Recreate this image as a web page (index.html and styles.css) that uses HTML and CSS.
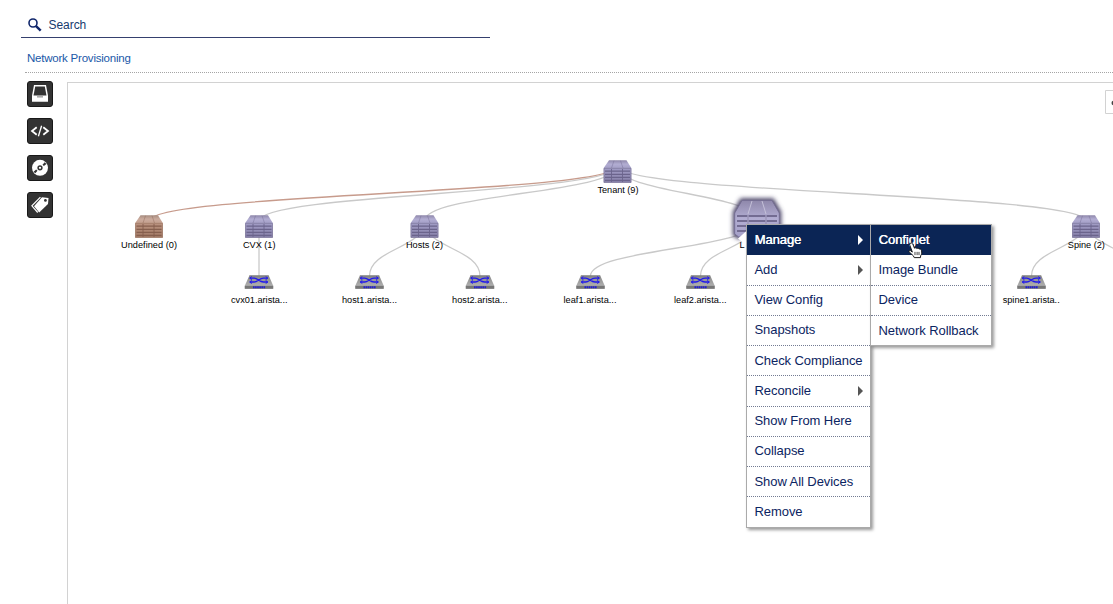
FILE: index.html
```html
<!DOCTYPE html>
<html lang="en">
<head>
<meta charset="utf-8">
<title>Network Provisioning</title>
<link rel="stylesheet" href="styles.css">
</head>
<body>
<header class="search">
  <svg class="search-icon" width="14" height="14" viewBox="0 0 14 14"><circle cx="5" cy="5" r="4" fill="none" stroke="#10266b" stroke-width="1.6"/><path d="M7.800 7.800 12.700 12.700" stroke="#10266b" stroke-width="2.400"/></svg>
  <span class="search-label">Search</span>
</header>
<nav class="breadcrumb"><span>Network Provisioning</span></nav>
<main class="workspace">
  <aside class="tools">
    <button class="tool" aria-label="Devices"><svg width="26" height="26" viewBox="0 0 26 26"><path d="M7 4h12l2 10.500v6.300H5v-6.300z" fill="#fff"/><path d="M8.200 5.500h9.600l1.700 9H6.500z" fill="#333"/><path d="M10 15h6v1.600h-6z" fill="#aaa"/></svg></button>
    <button class="tool" aria-label="Configlets"><svg width="26" height="26" viewBox="0 0 26 26" fill="none" stroke="#fff" stroke-width="1.8"><path d="M9.700 9.200 5 13l4.700 3.800M16.300 9.200l4.700 3.800-4.700 3.800"/><path d="M14.600 7.800 11.400 18.200" stroke-width="1.300"/></svg></button>
    <button class="tool" aria-label="Images"><svg width="26" height="26" viewBox="0 0 26 26"><circle cx="13" cy="12.800" r="8" fill="#fff"/><circle cx="13" cy="12.800" r="1.900" fill="#fff" stroke="#333" stroke-width="1.500"/><path d="m15.500 9.800 2.200-2.500 1.700 1.600-2.500 2.200zM10.500 15.800l-2.200 2.500-1.700-1.600 2.500-2.200z" fill="#333"/></svg></button>
    <button class="tool" aria-label="Labels"><svg width="26" height="26" viewBox="0 0 26 26"><path d="m15 5.200 6.500.8-.5 6-8.800 8.500L7 14.200z" fill="#fff"/><path d="M13.400 5.200 4.900 13.800l5.800 6.700" fill="none" stroke="#fff" stroke-width="1.200"/><circle cx="18.400" cy="8.400" r="1.400" fill="#333"/></svg></button>
  </aside>
  <section class="canvas">
    <svg class="tree" width="1045" height="521" viewBox="68 83 1045 521">
      <defs>
        <linearGradient id="roof" x1="0" y1="0" x2="0" y2="1"><stop offset="0" stop-color="#8f88ab"/><stop offset=".5" stop-color="#b2add2"/><stop offset="1" stop-color="#a5a0c8"/></linearGradient>
        <linearGradient id="body" x1="0" y1="0" x2="0" y2="1"><stop offset="0" stop-color="#a29dc6"/><stop offset="1" stop-color="#8680a8"/></linearGradient>
        <linearGradient id="roof-alert" x1="0" y1="0" x2="0" y2="1"><stop offset="0" stop-color="#a88e82"/><stop offset=".5" stop-color="#cbab9d"/><stop offset="1" stop-color="#c49f8f"/></linearGradient>
        <linearGradient id="body-alert" x1="0" y1="0" x2="0" y2="1"><stop offset="0" stop-color="#bb9380"/><stop offset="1" stop-color="#a17965"/></linearGradient>
        <linearGradient id="metal" x1="0" y1="0" x2="0" y2="1"><stop offset="0" stop-color="#858585"/><stop offset="1" stop-color="#bcbcbc"/></linearGradient>
        <filter id="glow" x="-30%" y="-30%" width="160%" height="160%"><feGaussianBlur stdDeviation="2"/></filter>
        <g id="rack-lines" fill="none">
          <path d="M-12.500-.8h25M-12.500 2.300h25M-12.500 5.300h25M-12.500 8.300h25" stroke-width="1.300"/>
          <path d="M-6-3v13M5-3v13" stroke-width=".9"/>
          <path d="M-3.500-11.300-6-4M3-11.300 5.500-4" stroke-width=".7" opacity=".55"/>
        </g>
        <g id="container">
          <path d="M-8.500-11.700h17.500l4.800 7.700h-27.600z" fill="url(#roof)"/>
          <path d="M-13.800-4h27.600v14.700h-27.600z" fill="url(#body)"/>
          <path d="M-13.500-3.700h27v14.100h-27z" fill="none" stroke="#777093" stroke-width=".6"/>
          <use href="#rack-lines" stroke="#6b648c"/>
        </g>
        <g id="container-alert">
          <path d="M-8.500-11.700h17.500l4.800 7.700h-27.600z" fill="url(#roof-alert)"/>
          <path d="M-13.800-4h27.600v14.700h-27.600z" fill="url(#body-alert)"/>
          <path d="M-13.500-3.700h27v14.100h-27z" fill="none" stroke="#987462" stroke-width=".6"/>
          <use href="#rack-lines" stroke="#865f4e"/>
        </g>
        <g id="switch">
          <path d="M-9.600-7.500H9.700L14.200 2.800V5.800h-28.400V2.800z" fill="url(#metal)"/>
          <path d="M-14.200 2.800h28.400V5.800h-28.400z" fill="#777"/>
          <path d="M-9.600-7.200H9.700" stroke="#777" stroke-width=".7"/>
          <g fill="none" stroke="#2119ed" stroke-width="1.350"><path d="M-9-4.900h4.200C-1.500-4.900.5-1 4.500-1H8.600M-9-1h4.200C-1.500-1 .5-4.900 4.500-4.900H8.600"/><path d="M6.700-6.400 8.900-4.900 6.700-3.400M6.700-2.500 8.900-1 6.700.5M-7.200-6.400-9.400-4.900-7.200-3.400M-7.200-2.500-9.400-1-7.200.5" stroke-width="1"/></g>
          <path d="M-6 4.300H6.300" stroke="#211bd5" stroke-width="1.900" stroke-dasharray="1.600 .5"/>
        </g>
      </defs>
      <g class="links">
        <path d="M617.500 166C617.500 193.500 259 193.500 259 221"/>
        <path d="M617.500 166C617.500 193.500 424.500 193.500 424.500 221"/>
        <path d="M617.500 166C617.500 193.500 757 193.500 757 221"/>
        <path d="M617.500 166C617.500 193.500 1086 193.500 1086 221"/>
        <path class="link-alert" d="M617.500 166C617.500 193.500 149 193.500 149 221"/>
        <path d="M259 221V276"/>
        <path d="M424.500 221C424.500 248.500 369.500 248.500 369.500 276"/>
        <path d="M424.500 221C424.500 248.500 480 248.500 480 276"/>
        <path d="M757 221C757 248.500 590.500 248.500 590.500 276"/>
        <path d="M757 221C757 248.500 700.500 248.500 700.500 276"/>
        <path d="M1086 221C1086 248.500 1031.500 248.500 1031.500 276"/>
        <path d="M1086 221C1086 248.500 1141.500 248.500 1141.500 276"/>
      </g>
      <use href="#container" x="617.500" y="172"/>
      <use href="#container-alert" x="149" y="227"/>
      <use href="#container" x="259" y="227"/>
      <use href="#container" x="424.500" y="227"/>
      <use href="#container" x="1086" y="227"/>
      <g transform="translate(757 220)">
        <path d="M-16-21h32l7.500 13V15l-4 3h-39l-4-3V-8z" fill="#4b4568" stroke="#4b4568" stroke-width="1.500" filter="url(#glow)"/>
        <path d="M-15-19.500h30L22.300-7V14l-4 3h-36.600l-4-3V-7z" fill="url(#roof)" stroke="#766f94" stroke-width="1"/>
        <path d="M-20-4h40M-20 1h40M-20 6h40M-20 11h40" stroke="#736c92" stroke-width="2" fill="none"/>
        <path d="M-9-5v22M9-5v22" stroke="#9d97bb" stroke-width="1.500"/>
        <path d="M-5-19-9-6M5-19 9-6" stroke="#c4c0d8" stroke-width="1"/>
      </g>
      <use href="#switch" x="259" y="283"/>
      <use href="#switch" x="369.500" y="283"/>
      <use href="#switch" x="480" y="283"/>
      <use href="#switch" x="590.500" y="283"/>
      <use href="#switch" x="700.500" y="283"/>
      <use href="#switch" x="1031.500" y="283"/>
      <g class="names">
        <text x="597.500" y="193" textLength="41">Tenant (9)</text>
        <text x="121" y="248" textLength="56">Undefined (0)</text>
        <text x="243" y="248" textLength="32.500">CVX (1)</text>
        <text x="406" y="248" textLength="37">Hosts (2)</text>
        <text x="739.500" y="248">L</text>
        <text x="1067.800" y="248" textLength="37">Spine (2)</text>
        <text x="231" y="303" textLength="56.500">cvx01.arista...</text>
        <text x="342" y="303" textLength="55">host1.arista...</text>
        <text x="452" y="303" textLength="55.500">host2.arista...</text>
        <text x="563.500" y="303" textLength="53">leaf1.arista...</text>
        <text x="674" y="303" textLength="52.500">leaf2.arista...</text>
        <text x="1002.700" y="303" textLength="57">spine1.arista..</text>
      </g>
      <path d="M747 230.500 738 238.500 747 246z" fill="#fff"/>
      <path d="M1105.500 90.500H1115V113.500H1105.500z" fill="#fff" stroke="#d2d2d2"/>
      <circle cx="1113.800" cy="103" r="2.300" fill="#444"/>
    </svg>
    <ul class="menu main-menu">
      <li class="active">Manage<i class="arrow"></i></li>
      <li>Add<i class="arrow"></i></li>
      <li>View Config</li>
      <li>Snapshots</li>
      <li>Check Compliance</li>
      <li>Reconcile<i class="arrow"></i></li>
      <li>Show From Here</li>
      <li>Collapse</li>
      <li>Show All Devices</li>
      <li>Remove</li>
    </ul>
    <ul class="menu sub-menu">
      <li class="active">Configlet</li>
      <li>Image Bundle</li>
      <li>Device</li>
      <li>Network Rollback</li>
    </ul>
    <svg class="pointer" width="15" height="17" viewBox="0 0 14 16"><path d="M2.300 1.200C3.400.5 4.200 1.300 4.600 2.300L6 5.800C7 5.200 7.900 5.500 8.300 6.200 9.100 5.600 10 6 10.300 6.700 11.300 6.200 12.200 6.700 12.600 7.900 13.200 10 12.800 11.800 11.800 13L11.700 14.700H5.800L5 13 1 9.300C.3 8.300 1.500 7.600 2.600 8.300L4 9.500 1.700 3.100C1.400 2.200 1.500 1.500 2.300 1.200z" fill="#fff" stroke="#111" stroke-width=".9"/><path d="M6.500 9.300v3M8.500 9.300v3M10.300 9.300v3" stroke="#222" stroke-width=".8"/></svg>
  </section>
</main>
</body>
</html>
```
FILE: styles.css
```css
* { box-sizing: border-box; }
body { margin: 0; width: 1113px; height: 604px; overflow: hidden; display: flex; flex-direction: column; background: #fff; font-family: "Liberation Sans", Arial, sans-serif; }
.search { height: 38px; width: 469px; margin-left: 21px; padding: 14px 0 0 7px; display: flex; align-items: center; gap: 6.500px; border-bottom: 1px solid #35406e; }
.search-icon { margin-top: -2px; }
.search-label { font-size: 12px; line-height: 15px; letter-spacing: -.05px; color: #173a6d; }
.breadcrumb { height: 35px; margin-left: 25px; padding: 13px 0 0 2px; border-bottom: 1px dotted #a5a5a5; font-size: 11.500px; line-height: 14px; letter-spacing: -.22px; color: #2058a8; }
.workspace { flex: 1; display: flex; padding: 9px 0 0 27px; }
.tools { width: 40px; display: flex; flex-direction: column; gap: 11px; margin-top: -1px; }
.tool { width: 26px; height: 26px; padding: 0; border: 1px solid #181818; border-radius: 3px; background: #333; display: flex; align-items: center; justify-content: center; flex: none; }
.tool svg { flex: none; }
.canvas { position: relative; flex: 1; border: solid #d2d2d2; border-width: 1px 0 0 1px; }
.tree { display: block; }
.links path { fill: none; stroke: #c9c9c9; stroke-width: 1.3; }
.links .link-alert { stroke: #c79b8c; }
.names { font-size: 9.200px; fill: #000; }
.menu { position: absolute; top: 141px; margin: 0; padding: 0; list-style: none; background: #fff; border: 1px solid #aaa; box-shadow: 2px 2px 3px rgba(0,0,0,.4); color: #0b2461; font-size: 13px; letter-spacing: -.07px; }
.main-menu { left: 678px; width: 125px; height: 304px; }
.sub-menu { left: 802px; width: 122px; height: 122px; }
.menu li { height: 30.250px; padding: 0 7px 1px 7.500px; display: flex; align-items: center; justify-content: space-between; white-space: nowrap; border-bottom: 1px dotted #737b92; }
.menu li:last-child { border-bottom: 0; }
.menu .active { background: #0b2555; color: #fff; text-shadow: .4px 0 #fff; border-bottom-color: #0b2555; }
.arrow { margin-top: 2px; border: solid transparent; border-width: 5px 0 5px 5px; border-left-color: #555; }
.active .arrow { border-left-color: #fff; }
.pointer { position: absolute; left: 840px; top: 159px; }
```
